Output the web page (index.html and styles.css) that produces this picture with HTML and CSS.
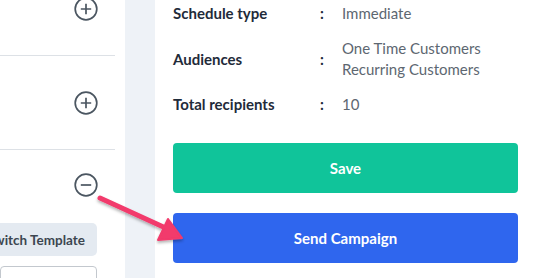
FILE: index.html
```html
<!DOCTYPE html>
<html>
<head>
<meta charset="utf-8">
<link rel="stylesheet" href="styles.css">
</head>
<body>
<div class="page">
  <div class="left">
    <div class="section s1">
      <svg class="toggle" width="24" height="24" viewBox="0 0 24 24"><circle cx="12" cy="12" r="10.8" fill="none" stroke="#4b5661" stroke-width="1.7"/><path d="M6.8 12h10.4M12 6.8v10.4" stroke="#4b5661" stroke-width="1.7" fill="none"/></svg>
    </div>
    <div class="section s2">
      <svg class="toggle" width="24" height="24" viewBox="0 0 24 24"><circle cx="12" cy="12" r="10.8" fill="none" stroke="#4b5661" stroke-width="1.7"/><path d="M6.8 12h10.4M12 6.8v10.4" stroke="#4b5661" stroke-width="1.7" fill="none"/></svg>
    </div>
    <div class="section s3">
      <svg class="toggle" width="24" height="24" viewBox="0 0 24 24"><circle cx="12" cy="12" r="10.8" fill="none" stroke="#4b5661" stroke-width="1.7"/><path d="M6.8 12h10.4" stroke="#4b5661" stroke-width="1.7" fill="none"/></svg>
      <div class="switch-row"><button class="switch">Switch Template</button></div>
      <div class="input-row"><div class="input"></div></div>
    </div>
  </div>
  <div class="strip"></div>
  <div class="right">
    <div class="summary">
      <div class="row"><div class="label">Schedule type</div><div class="colon">:</div><div class="value">Immediate</div></div>
      <div class="row"><div class="label">Audiences</div><div class="colon">:</div><div class="value">One Time Customers<br>Recurring Customers</div></div>
      <div class="row"><div class="label">Total recipients</div><div class="colon">:</div><div class="value">10</div></div>
    </div>
    <div class="actions">
      <button class="btn save">Save</button>
      <button class="btn send">Send Campaign</button>
    </div>
  </div>
  <svg class="arrow" width="533" height="278" viewBox="0 0 533 278">
    <defs>
      <filter id="sh" x="-20%" y="-20%" width="140%" height="140%">
        <feDropShadow dx="0" dy="2" stdDeviation="1.5" flood-color="#000" flood-opacity="0.3"/>
      </filter>
    </defs>
    <g filter="url(#sh)" fill="#f23a6c" stroke="#f23a6c" stroke-linecap="round" stroke-linejoin="round">
      <path d="M100 198 L170 230" stroke-width="5" fill="none"/>
      <path d="M182 238 L158 240 L168 219 Z" stroke-width="2"/>
    </g>
  </svg>
</div>
</body>
</html>
```
FILE: styles.css
```css
* { box-sizing: border-box; }
html, body { margin: 0; padding: 0; }
body {
  width: 533px;
  height: 278px;
  overflow: hidden;
  background: #fff;
  font-family: Lato, "Open Sans", sans-serif;
}
.page {
  position: relative;
  display: flex;
  height: 278px;
}
.left {
  width: 125px;
  padding-right: 10px;
  overflow: hidden;
  background: #fff;
}
.section {
  display: flex;
  flex-direction: column;
  align-items: flex-end;
}
.s1 {
  height: 56px;
  border-bottom: 1px solid #dde1e6;
  padding-top: 0;
}
.s1 .toggle { margin-top: -3px; }
.s2 {
  height: 94px;
  border-bottom: 1px solid #dde1e6;
  padding-top: 35px;
}
.s3 { padding-top: 23px; }
.toggle { margin-right: 17px; display: block; }
.switch-row {
  display: flex;
  justify-content: flex-end;
  width: 115px;
  margin-top: 26px;
  padding-right: 18px;
}
.switch {
  flex: none;
  width: 130px;
  height: 33px;
  border: none;
  border-radius: 5px;
  background: #e4eaf1;
  color: #3c4650;
  font-family: Lato, sans-serif;
  font-weight: 700;
  font-size: 13.5px;
  padding: 0 12px 0 0;
  text-align: right;
}
.input-row {
  width: 115px;
  padding-right: 18px;
  margin-top: 10px;
  display: flex;
  justify-content: flex-end;
}
.input {
  width: 130px;
  height: 30px;
  border: 1px solid #c3c8ce;
  border-radius: 4px;
}
.strip {
  width: 30px;
  background: #eef2f7;
}
.right {
  flex: 1;
  padding: 3px 15px 0 18px;
}
.summary {
  display: flex;
  flex-direction: column;
  gap: 14px;
}
.row {
  display: flex;
  align-items: center;
  font-size: 15px;
  line-height: 21px;
}
.label {
  width: 147px;
  font-weight: 700;
  color: #1f2b3a;
}
.colon {
  width: 22px;
  color: #1f2b3a;
  font-weight: 700;
}
.value {
  color: #5d6771;
}
.actions {
  display: flex;
  flex-direction: column;
  gap: 20px;
  margin-top: 28px;
}
.btn {
  height: 50px;
  border: none;
  border-radius: 4px;
  color: #fff;
  font-family: Lato, sans-serif;
  font-weight: 700;
  font-size: 15px;
  width: 100%;
}
.save { background: #10c49a; }
.send { background: #2f66ee; }
.arrow {
  position: absolute;
  left: 0;
  top: 0;
  pointer-events: none;
}
```
